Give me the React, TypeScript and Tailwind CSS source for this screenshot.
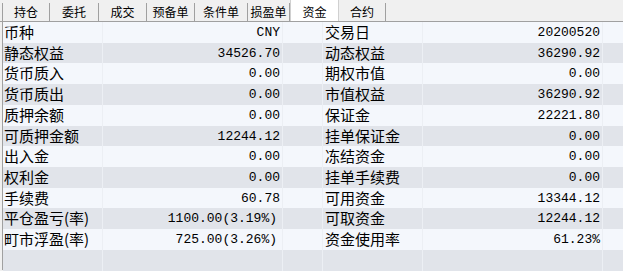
import React from 'react';

const tabs = [
  { name: '持仓', w: 'w-[47px]' },
  { name: '委托', w: 'w-[49px]' },
  { name: '成交', w: 'w-[48px]' },
  { name: '预备单', w: 'w-[48px]' },
  { name: '条件单', w: 'w-[53px]' },
  { name: '损盈单', w: 'w-[42px]' },
  { name: '资金', w: 'w-[49px]', active: true },
  { name: '合约', w: 'w-[47px]' },
];

const rows: [string, string, string, string][] = [
  ['币种', 'CNY', '交易日', '20200520'],
  ['静态权益', '34526.70', '动态权益', '36290.92'],
  ['货币质入', '0.00', '期权市值', '0.00'],
  ['货币质出', '0.00', '市值权益', '36290.92'],
  ['质押余额', '0.00', '保证金', '22221.80'],
  ['可质押金额', '12244.12', '挂单保证金', '0.00'],
  ['出入金', '0.00', '冻结资金', '0.00'],
  ['权利金', '0.00', '挂单手续费', '0.00'],
  ['手续费', '60.78', '可用资金', '13344.12'],
  ['平仓盈亏(率)', '1100.00(3.19%)', '可取资金', '12244.12'],
  ['町市浮盈(率)', '725.00(3.26%)', '资金使用率', '61.23%'],
  ['', '', '', ''],
];

const cjk = "font-['Noto_Sans_CJK_SC',sans-serif]";
const mono = "font-['Liberation_Mono','Noto_Sans_CJK_SC',monospace]";

export default function App() {
  return (
    <div className="w-[623px] h-[271px] overflow-hidden bg-[#f0f0f0] text-black">
      {/* tab strip */}
      <div className={`flex h-[22px] pl-[3px] border-b border-[#a0a0a0] ${cjk} text-[12px]`}>
        <div className="w-px h-[19px] mt-[3px] -ml-px bg-[#a0a0a0]" />
        {tabs.map((t) => (
          <div
            key={t.name}
            className={`${t.w} flex items-end justify-center pb-[1px] leading-[16px] ${
              t.active
                ? 'bg-white -mt-[1px] border-x border-[#d0d0d0]'
                : 'border-r border-[#a0a0a0] mt-[3px]'
            }`}
          >
            {t.name}
          </div>
        ))}
      </div>

      {/* data grid */}
      <div className="ml-[2px] border-l border-[#a0a0a0] h-[248px]">
        {rows.map((r, i) => (
          <div
            key={i}
            className={`grid grid-cols-[100px_180px_40px_100px_180px_40px] h-[20.73px] ${
              i % 2 === 0 ? 'bg-[#f4f7fc]' : 'bg-[#e1e4ea]'
            }`}
          >
            <div className={`pl-[1px] border-r border-[#eceff4] ${cjk} text-[15px] leading-[20px] whitespace-nowrap`}>
              {r[0]}
            </div>
            <div
              className={`${r[1].includes('(') ? 'pr-[5px]' : 'pr-[2px]'} text-right border-r border-[#eceff4] ${mono} text-[13px] leading-[21px] whitespace-nowrap`}
            >
              {r[1]}
            </div>
            <div className="border-r border-[#eceff4]" />
            <div className={`pl-[2px] border-r border-[#eceff4] ${cjk} text-[15px] leading-[20px] whitespace-nowrap`}>
              {r[2]}
            </div>
            <div className={`pr-[2px] text-right border-r border-[#eceff4] ${mono} text-[13px] leading-[21px] whitespace-nowrap`}>
              {r[3]}
            </div>
            <div />
          </div>
        ))}
      </div>
    </div>
  );
}
